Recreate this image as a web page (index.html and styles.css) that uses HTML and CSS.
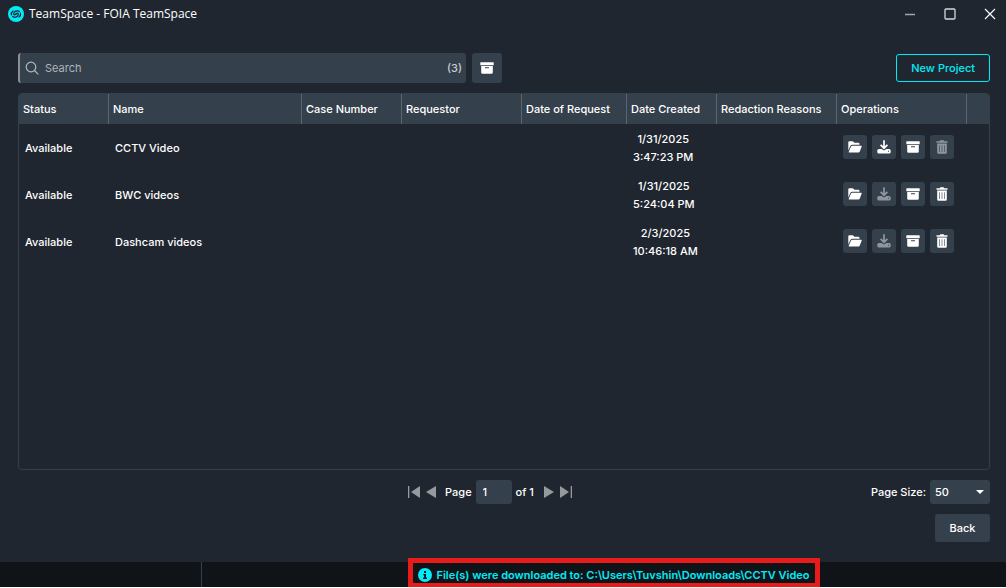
FILE: index.html
```html
<!DOCTYPE html>
<html lang="en">
<head>
    <meta charset="UTF-8">
    <meta name="viewport" content="width=device-width, initial-scale=1.0">
    <title>TeamSpace - FOIA TeamSpace</title>
    <link rel="stylesheet" href="styles.css">
</head>
<body>
    <!-- Shared icons -->
    <svg class="sprite" aria-hidden="true">
        <symbol id="icon-folder" viewBox="0 0 14 14">
            <path d="M0.3 10.5V2.3Q0.3 1.2 1.4 1.2H4.8L6.5 2.8H10.3Q11.5 2.8 11.5 4V4.8H4.2Q3 4.8 2.5 5.8Z"/>
            <path d="M4.1 5.7H13.2Q14 5.7 13.7 6.5L11.8 11.6Q11.4 12.5 10.4 12.5H1.2Q0.4 12.5 0.8 11.6L3.1 6.4Q3.4 5.7 4.1 5.7Z"/>
        </symbol>
        <symbol id="icon-download" viewBox="0 0 14 14">
            <path d="M7 0.3V8M3.6 4.8L7 8.2L10.4 4.8" fill="none" stroke="currentColor" stroke-width="1.7"/>
            <path fill-rule="evenodd" d="M2 9H4.6L7 10.6L9.4 9H12Q13.7 9 13.7 10.5V12Q13.7 13.5 12 13.5H2Q0.3 13.5 0.3 12V10.5Q0.3 9 2 9ZM11 10.7V11.7H12V10.7Z"/>
        </symbol>
        <symbol id="icon-archive" viewBox="0 0 14 14">
            <rect x="0.3" y="1.2" width="13.4" height="3.1" rx="0.5"/>
            <path fill-rule="evenodd" d="M1.2 5.1H12.8V11.5Q12.8 12.8 11.5 12.8H2.5Q1.2 12.8 1.2 11.5ZM5 6.2V7.2H9V6.2Z"/>
        </symbol>
        <symbol id="icon-trash" viewBox="0 0 14 14">
            <path d="M1.5 1.3H4.7L5.4 0.3H8.6L9.3 1.3H12.5V2.8H1.5Z"/>
            <path fill-rule="evenodd" d="M2.2 3.6H11.8V12.4Q11.8 13.7 10.5 13.7H3.5Q2.2 13.7 2.2 12.4ZM4.3 5.3V12H4.9V5.3ZM6.7 5.3V12H7.3V5.3ZM9.1 5.3V12H9.7V5.3Z"/>
        </symbol>
    </svg>

    <div class="app">
        <header class="titlebar">
            <svg class="logo" viewBox="0 0 16 16" aria-hidden="true">
                <circle cx="8" cy="8" r="8" fill="#00ecf8"/>
                <g fill="none" stroke="#20262f" stroke-width="1.2" stroke-linecap="round">
                    <path d="M8 8Q6.3 9.6 5.7 8Q5.4 6 7.6 5.1Q9.8 4.4 11.4 5.6"/>
                    <path d="M8 8Q9.7 6.4 10.3 8Q10.6 10 8.4 10.9Q6.2 11.6 4.6 10.4"/>
                    <path d="M5 4.9Q2.9 6.4 3.5 8.8"/>
                    <path d="M11 11.1Q13.1 9.6 12.5 7.2"/>
                </g>
            </svg>
            <h1>TeamSpace - FOIA TeamSpace</h1>
            <div class="window-buttons">
                <button type="button" aria-label="Minimize">
                    <svg viewBox="0 0 12 12"><path d="M1 6.5H11" stroke="#a2a6ab" stroke-width="1.5"/></svg>
                </button>
                <button type="button" aria-label="Maximize">
                    <svg viewBox="0 0 12 12"><rect x="1" y="1" width="10" height="10" rx="1" stroke="#d5d7da" stroke-width="1.3"/></svg>
                </button>
                <button type="button" aria-label="Close">
                    <svg viewBox="0 0 12 12"><path d="M1 1L11 11M11 1L1 11" stroke="#fff" stroke-width="1.2"/></svg>
                </button>
            </div>
        </header>

        <main>
            <div class="toolbar">
                <div class="search">
                    <svg viewBox="0 0 14 14" aria-hidden="true"><circle cx="6" cy="6" r="4.8"/><path d="M9.5 9.5L13.3 13.3"/></svg>
                    <input type="text" placeholder="Search" aria-label="Search">
                    <span class="count">(3)</span>
                </div>
                <button type="button" class="archive-toggle" aria-label="Show archived"><svg><use href="#icon-archive"/></svg></button>
                <button type="button" class="new-project">New Project</button>
            </div>

            <div class="grid">
                <table>
                    <colgroup>
                        <col class="col-status">
                        <col>
                        <col class="col-case">
                        <col class="col-requestor">
                        <col class="col-requested">
                        <col class="col-created">
                        <col class="col-reasons">
                        <col class="col-operations">
                        <col class="col-end">
                    </colgroup>
                    <thead>
                        <tr>
                            <th>Status</th>
                            <th>Name</th>
                            <th>Case Number</th>
                            <th>Requestor</th>
                            <th>Date of Request</th>
                            <th>Date Created</th>
                            <th>Redaction Reasons</th>
                            <th>Operations</th>
                            <th></th>
                        </tr>
                    </thead>
                    <tbody>
                        <tr>
                            <td>Available</td>
                            <td>CCTV Video</td>
                            <td></td>
                            <td></td>
                            <td></td>
                            <td><span class="date">1/31/2025<br>3:47:23 PM</span></td>
                            <td></td>
                            <td>
                                <div class="operations">
                                    <button type="button" aria-label="Open"><svg><use href="#icon-folder"/></svg></button>
                                    <button type="button" aria-label="Download"><svg><use href="#icon-download"/></svg></button>
                                    <button type="button" aria-label="Archive"><svg><use href="#icon-archive"/></svg></button>
                                    <button type="button" aria-label="Delete" disabled><svg><use href="#icon-trash"/></svg></button>
                                </div>
                            </td>
                            <td></td>
                        </tr>
                        <tr>
                            <td>Available</td>
                            <td>BWC videos</td>
                            <td></td>
                            <td></td>
                            <td></td>
                            <td><span class="date">1/31/2025<br>5:24:04 PM</span></td>
                            <td></td>
                            <td>
                                <div class="operations">
                                    <button type="button" aria-label="Open"><svg><use href="#icon-folder"/></svg></button>
                                    <button type="button" aria-label="Download" disabled><svg><use href="#icon-download"/></svg></button>
                                    <button type="button" aria-label="Archive"><svg><use href="#icon-archive"/></svg></button>
                                    <button type="button" aria-label="Delete"><svg><use href="#icon-trash"/></svg></button>
                                </div>
                            </td>
                            <td></td>
                        </tr>
                        <tr>
                            <td>Available</td>
                            <td>Dashcam videos</td>
                            <td></td>
                            <td></td>
                            <td></td>
                            <td><span class="date">2/3/2025<br>10:46:18 AM</span></td>
                            <td></td>
                            <td>
                                <div class="operations">
                                    <button type="button" aria-label="Open"><svg><use href="#icon-folder"/></svg></button>
                                    <button type="button" aria-label="Download" disabled><svg><use href="#icon-download"/></svg></button>
                                    <button type="button" aria-label="Archive"><svg><use href="#icon-archive"/></svg></button>
                                    <button type="button" aria-label="Delete"><svg><use href="#icon-trash"/></svg></button>
                                </div>
                            </td>
                            <td></td>
                        </tr>
                    </tbody>
                </table>
            </div>

            <div class="paging">
                <div class="pager">
                    <button type="button" aria-label="First page"><svg class="wide" viewBox="0 0 12 12"><path d="M0 0H1.3V12H0ZM12 0V12L3 6Z"/></svg></button>
                    <button type="button" aria-label="Previous page"><svg viewBox="0 0 10 12"><path d="M10 0V12L0 6Z"/></svg></button>
                    <label for="page">Page</label>
                    <input type="text" id="page" value="1">
                    <span class="total">of 1</span>
                    <button type="button" aria-label="Next page"><svg viewBox="0 0 10 12"><path d="M0 0V12L10 6Z"/></svg></button>
                    <button type="button" aria-label="Last page"><svg class="wide" viewBox="0 0 12 12"><path d="M10.7 0H12V12H10.7ZM0 0V12L9 6Z"/></svg></button>
                </div>
                <div class="page-size">
                    <label for="pageSize">Page Size:</label>
                    <div class="select">
                        <select id="pageSize">
                            <option>50</option>
                        </select>
                        <svg viewBox="0 0 8 4" aria-hidden="true"><path d="M0 0H8L4 4Z"/></svg>
                    </div>
                </div>
            </div>

            <button type="button" class="back">Back</button>
        </main>

        <footer class="statusbar">
            <div class="status-left"></div>
            <div class="status-right">
                <p class="message">
                    <svg viewBox="0 0 14 14" aria-hidden="true">
                        <circle cx="7" cy="7" r="7" fill="#00ecf8"/>
                        <path d="M6 3H8V5H6ZM5.3 6H8V9.6H8.9V11H5.1V9.6H6.1V7.3H5.3Z" fill="#101317"/>
                    </svg>
                    File(s) were downloaded to: C:\Users\Tuvshin\Downloads\CCTV Video
                </p>
            </div>
        </footer>
    </div>
</body>
</html>
```
FILE: styles.css
```css
* {
    box-sizing: border-box;
}
body {
    margin: 0;
    background-color: #fff;
    color: #fff;
    font-family: Inter, sans-serif;
    font-size: 11px;
    font-weight: 500;
    line-height: 18px;
}
button, input, select {
    font: inherit;
    color: inherit;
    border: none;
    padding: 0;
}
button {
    display: flex;
    align-items: center;
    justify-content: center;
    border-radius: 3px;
    background-color: #35404d;
    cursor: pointer;
}
svg {
    display: block;
    fill: currentColor;
}
.sprite {
    display: none;
}
.app {
    display: flex;
    flex-direction: column;
    min-height: calc(100vh - 1px);
    background-color: #20262f;
}

/* Title bar */
.titlebar {
    display: flex;
    align-items: center;
    height: 28px;
    padding-left: 8px;
}
.logo {
    width: 16px;
    height: 16px;
}
.titlebar h1 {
    margin: 0 0 0 5px;
    font-family: "Open Sans", sans-serif;
    font-size: 12px;
    font-weight: 400;
}
.window-buttons {
    display: flex;
    margin-left: auto;
}
.window-buttons button {
    width: 40px;
    height: 28px;
    background: none;
}
.window-buttons button:last-child {
    width: 32px;
    margin-left: 4px;
}
.window-buttons svg {
    width: 12px;
    height: 12px;
    fill: none;
}

main {
    display: flex;
    flex: 1;
    flex-direction: column;
    padding: 25px 16px 20px 18px;
}

/* Toolbar */
.toolbar {
    display: flex;
    align-items: center;
    gap: 6px;
    margin-bottom: 10px;
}
.search {
    display: flex;
    flex: 0 1 448px;
    align-items: center;
    height: 30px;
    padding: 0 4px 0 5px;
    border-left: 2px solid #8b9096;
    border-radius: 3px;
    background-color: #35404d;
    color: #c9cdd2;
}
.search svg {
    width: 14px;
    height: 14px;
    fill: none;
    stroke: #b4b8bd;
    stroke-width: 1.2;
}
.search input {
    flex: 1;
    min-width: 0;
    margin-left: 6px;
    background: none;
    font-weight: 400;
}
.search input::placeholder {
    color: #b0b4b9;
}
.archive-toggle {
    width: 30px;
    height: 30px;
}
.archive-toggle svg {
    width: 14px;
    height: 14px;
}
.new-project {
    height: 28px;
    margin-left: auto;
    padding: 0 14px;
    border: 1px solid #00ecf8;
    background: none;
    color: #00ecf8;
}

/* Projects table */
.grid {
    flex: 1;
    overflow: hidden;
    border: 1px solid #35404d;
    border-radius: 4px;
}
table {
    width: 100%;
    table-layout: fixed;
    border-collapse: collapse;
}
.col-status, .col-created {
    width: 90px;
}
.col-case {
    width: 100px;
}
.col-requestor, .col-reasons {
    width: 120px;
}
.col-requested {
    width: 105px;
}
.col-operations {
    width: 130px;
}
.col-end {
    width: 22px;
}
th {
    height: 30px;
    padding: 0 4px;
    background: linear-gradient(#5b6570, #5b6570) right / 1px 100% no-repeat #35404d;
    font-weight: 500;
    text-align: left;
    white-space: nowrap;
}
th:last-child {
    background: #35404d;
}
td {
    height: 47px;
    padding: 0 6px;
}
.date {
    display: inline-block;
    text-align: center;
    white-space: nowrap;
}
.operations {
    display: flex;
    gap: 5px;
    padding-bottom: 2px;
}
.operations button {
    width: 24px;
    height: 24px;
}
.operations svg {
    width: 14px;
    height: 14px;
}
.operations button:disabled svg {
    opacity: 0.45;
}

/* Paging */
.paging {
    display: grid;
    grid-template-columns: 1fr auto 1fr;
    align-items: center;
    margin-top: 10px;
}
.pager {
    display: flex;
    grid-column: 2;
    align-items: center;
    padding-right: 28px;
}
.pager button {
    margin-right: 6px;
    background: none;
    color: #969a9f;
}
.pager button:last-child {
    margin-right: 0;
}
.pager svg {
    width: 10px;
    height: 12px;
}
.pager svg.wide {
    width: 12px;
}
.pager label {
    margin: 0 4px 0 3px;
}
.pager input {
    width: 36px;
    height: 24px;
    padding: 0 7px;
    border-radius: 3px;
    background-color: #35404d;
}
.total {
    margin: 0 10px 0 4px;
}
.page-size {
    display: flex;
    align-items: center;
    justify-content: flex-end;
    gap: 4px;
}
.select {
    position: relative;
}
.select select {
    display: block;
    width: 60px;
    height: 24px;
    padding: 0 5px;
    border-radius: 3px;
    background-color: #35404d;
    appearance: none;
}
.select svg {
    position: absolute;
    top: 10px;
    right: 6px;
    width: 8px;
    height: 4px;
    pointer-events: none;
}
.back {
    align-self: flex-end;
    width: 55px;
    height: 28px;
    margin-top: 10px;
}

/* Status bar */
.statusbar {
    display: flex;
    height: 25px;
    background-color: #101317;
}
.status-left {
    width: 202px;
    border-right: 1px solid #35404d;
}
.status-right {
    display: flex;
    flex: 1;
    align-items: center;
    justify-content: center;
    padding-left: 20px;
}
.message {
    position: relative;
    display: flex;
    align-items: center;
    gap: 4px;
    margin: 0;
    color: #00ecf8;
    font-weight: 600;
    white-space: nowrap;
}
.message svg {
    width: 14px;
    height: 14px;
}
.message::after {
    content: "";
    position: absolute;
    inset: -8px -10px -4px;
    border: 5px solid #e81b1b;
}
```
